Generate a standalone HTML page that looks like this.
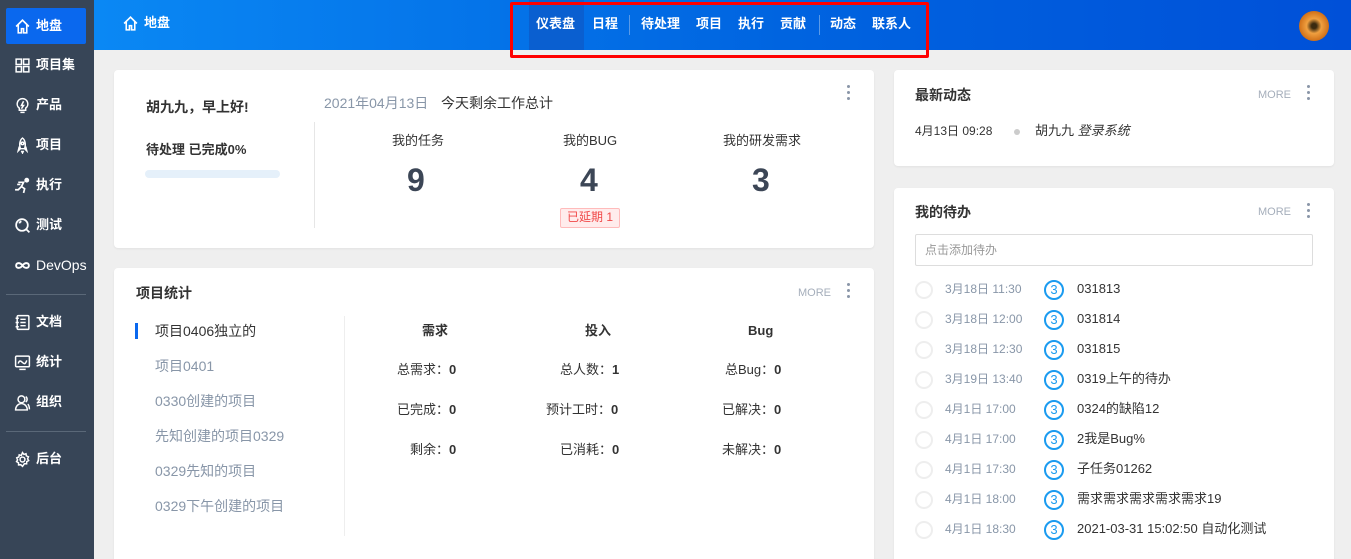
<!DOCTYPE html>
<html><head><meta charset="utf-8"><style>
*{margin:0;padding:0;box-sizing:border-box}
html,body{width:1351px;height:559px;overflow:hidden}
body{background:#efefef;font-family:"Liberation Sans","Noto Sans CJK SC",sans-serif;font-size:13px;color:#333;position:relative;line-height:1.15}
.abs{position:absolute}
#side{left:0;top:0;width:94px;height:559px;background:#374557}
.si{position:absolute;left:6px;width:80px;height:36px;color:#fff;font-weight:bold;font-size:13px;display:flex;align-items:center;padding-left:8px;gap:5px}
.si svg{width:17px;height:17px;flex:none}
.si.act{background:#0a68ee;border-radius:2px}
.sep{position:absolute;left:6px;width:80px;height:1px;background:#5a6878}
#hdr{left:94px;top:0;width:1257px;height:50px;background:linear-gradient(90deg,#0a88f4,#0064e0 55%,#0050d8)}
.nav{position:absolute;top:17px;color:#fff;font-weight:bold;font-size:13px}
.card{position:absolute;background:#fff;border-radius:4px;box-shadow:0 1px 2px rgba(0,0,0,.06)}
.dots{position:absolute;width:4px}
.dots i{display:block;width:3px;height:3px;border-radius:50%;background:#8a96a8;margin-bottom:3px}
.more{position:absolute;font-size:11px;color:#a5aebb}
.t{position:absolute;white-space:nowrap}
.c{position:absolute;width:18px;height:18px;border:2px solid #eee;border-radius:50%}
.n3{position:absolute;width:20px;height:20px;border:2px solid #1a9bf0;border-radius:50%;color:#1a9bf0;font-size:13px;text-align:center;line-height:16px}
</style></head><body>
<div id="side" class="abs">
<div class="si act" style="top:8px"><svg viewBox="0 0 16 16" fill="none" stroke="#fff" stroke-width="1.5"><path d="M2 8L8 2l6 6M4 6.5V14h3v-4h2v4h3V6.5"/></svg>地盘</div>
<div class="si" style="top:47px"><svg viewBox="0 0 16 16" fill="none" stroke="#fff" stroke-width="1.4"><rect x="2" y="2" width="5" height="5"/><rect x="9" y="2" width="5" height="5"/><rect x="2" y="9" width="5" height="5"/><rect x="9" y="9" width="5" height="5"/></svg>项目集</div>
<div class="si" style="top:87px"><svg viewBox="0 0 16 16" fill="none" stroke="#fff" stroke-width="1.4"><path d="M8 1.5a5 5 0 0 0-3 9v2h6v-2a5 5 0 0 0-3-9zM6 14.5h4M9 4L7 8h2l-2 3"/></svg>产品</div>
<div class="si" style="top:127px"><svg viewBox="0 0 16 16" fill="none" stroke="#fff" stroke-width="1.4"><path d="M8 1c3 2 3 7 2 10H6C5 8 5 3 8 1zM6 11l-2 2 1-4M10 11l2 2-1-4M7 13l1 2 1-2"/><circle cx="8" cy="6" r="1.2"/></svg>项目</div>
<div class="si" style="top:167px"><svg viewBox="0 0 16 16" fill="none" stroke="#fff" stroke-width="1.6"><circle cx="12" cy="3" r="1.5" fill="#fff"/><path d="M4 5h5l-2 4 3 2-1 4M7 9l-3 3H1M3 7h3"/></svg>执行</div>
<div class="si" style="top:207px"><svg viewBox="0 0 16 16" fill="none" stroke="#fff" stroke-width="1.6"><circle cx="7.5" cy="7.5" r="5.5"/><path d="M11.5 11.5l3 3M5 6a3 3 0 0 1 2-2"/></svg>测试</div>
<div class="si" style="top:247px;font-weight:normal;font-size:14px"><svg viewBox="0 0 16 16" fill="none" stroke="#fff" stroke-width="1.8"><path d="M8 8c-2-3-6-3-6 0s4 3 6 0 6-3 6 0-4 3-6 0z"/></svg>DevOps</div>
<div class="sep" style="top:294px"></div>
<div class="si" style="top:304px"><svg viewBox="0 0 16 16" fill="none" stroke="#fff" stroke-width="1.4"><rect x="3" y="1.5" width="11" height="13" rx="1"/><path d="M6 5h5M6 8h5M6 11h5M1.5 4h3M1.5 8h3M1.5 12h3"/></svg>文档</div>
<div class="si" style="top:344px"><svg viewBox="0 0 16 16" fill="none" stroke="#fff" stroke-width="1.4"><rect x="1.5" y="2" width="13" height="10" rx="1"/><path d="M4 9c1-3 2-3 4-1s3 1 4-2M5 14.5h6"/></svg>统计</div>
<div class="si" style="top:384px"><svg viewBox="0 0 16 16" fill="none" stroke="#fff" stroke-width="1.4"><circle cx="7" cy="5" r="3.2"/><path d="M1.5 15c0-4 3-6 5.5-6s5.5 2 5.5 6zM11 2.5a3 3 0 0 1 0 5M13 9.5c1 1 1.5 3 1.5 5"/></svg>组织</div>
<div class="sep" style="top:431px"></div>
<div class="si" style="top:441px"><svg viewBox="0 0 16 16" fill="none" stroke="#fff" stroke-width="1.4"><circle cx="8" cy="8" r="2.3"/><path d="M8 1.5l1.3 1.7 2-.6.3 2 2 .8-.8 2 1 1.6-1.8 1-.1 2.1-2.1-.2L8 14.5l-1.6-1.6-2.1.2-.1-2.1-1.8-1 1-1.6-.8-2 2-.8.3-2 2 .6z"/></svg>后台</div>
</div>
<div id="hdr" class="abs">
<div class="abs" style="left:28px;top:15px;color:#fff;font-weight:bold;display:flex;gap:5px;align-items:center"><svg width="17" height="17" viewBox="0 0 16 16" fill="none" stroke="#fff" stroke-width="1.5"><path d="M2 8L8 2l6 6M4 6.5V14h3v-4h2v4h3V6.5"/></svg>地盘</div>
<div class="abs" style="left:435px;top:0;width:55px;height:50px;background:#0a5fd0"></div>
<div class="nav" style="left:442px">仪表盘</div>
<div class="nav" style="left:498px">日程</div>
<div class="abs" style="left:535px;top:15px;width:1px;height:20px;background:#5a9ae8"></div>
<div class="nav" style="left:547px">待处理</div>
<div class="nav" style="left:602px">项目</div>
<div class="nav" style="left:644px">执行</div>
<div class="nav" style="left:686px">贡献</div>
<div class="abs" style="left:725px;top:15px;width:1px;height:20px;background:#5a9ae8"></div>
<div class="nav" style="left:736px">动态</div>
<div class="nav" style="left:778px">联系人</div>
<div class="abs" style="left:1205px;top:11px;width:30px;height:30px;border-radius:50%;background:radial-gradient(circle,#3a2a10 12%,#f0a040 35%,#d07018 70%,#4a3018)"></div>
</div>
<div class="abs" style="left:510px;top:2px;width:419px;height:56px;border:3px solid #f00;border-radius:2px"></div>

<div class="card" style="left:114px;top:70px;width:760px;height:178px">
<div class="t" style="left:32px;top:29px;font-weight:bold;font-size:14px">胡九九，早上好!</div>
<div class="t" style="left:32px;top:73px;font-weight:bold">待处理 已完成0%</div>
<div class="abs" style="left:31px;top:100px;width:135px;height:8px;border-radius:4px;background:#e5f0fa"></div>
<div class="abs" style="left:200px;top:52px;width:1px;height:106px;background:#e6e6e6"></div>
<div class="t" style="left:210px;top:25px;font-size:14px;color:#8896a8">2021年04月13日</div>
<div class="t" style="left:327px;top:25px;font-size:14px">今天剩余工作总计</div>
<div class="t" style="left:278px;top:64px">我的任务</div>
<div class="t" style="left:293px;top:92px;font-size:32px;font-weight:bold;color:#3c4656">9</div>
<div class="t" style="left:449px;top:64px">我的BUG</div>
<div class="t" style="left:466px;top:92px;font-size:32px;font-weight:bold;color:#3c4656">4</div>
<div class="t" style="left:446px;top:138px;padding:2px 6px;border:1px solid #fbb;background:#ffecec;color:#f04848;font-size:12px;border-radius:2px">已延期 1</div>
<div class="t" style="left:609px;top:64px">我的研发需求</div>
<div class="t" style="left:638px;top:92px;font-size:32px;font-weight:bold;color:#3c4656">3</div>
<div class="dots" style="left:733px;top:15px"><i></i><i></i><i></i></div>
</div>

<div class="card" style="left:114px;top:268px;width:760px;height:300px">
<div class="t" style="left:22px;top:17px;font-weight:bold;font-size:14px">项目统计</div>
<div class="more" style="left:684px;top:19px">MORE</div>
<div class="dots" style="left:733px;top:15px"><i></i><i></i><i></i></div>
<div class="abs" style="left:21px;top:55px;width:3px;height:16px;background:#0a68ee"></div>
<div class="t" style="left:41px;top:55px;font-size:14px">项目0406独立的</div>
<div class="t" style="left:41px;top:90px;font-size:14px;color:#8896a8">项目0401</div>
<div class="t" style="left:41px;top:125px;font-size:14px;color:#8896a8">0330创建的项目</div>
<div class="t" style="left:41px;top:160px;font-size:14px;color:#8896a8">先知创建的项目0329</div>
<div class="t" style="left:41px;top:195px;font-size:14px;color:#8896a8">0329先知的项目</div>
<div class="t" style="left:41px;top:230px;font-size:14px;color:#8896a8">0329下午创建的项目</div>
<div class="abs" style="left:230px;top:48px;width:1px;height:220px;background:#eee"></div>
<div class="t" style="left:308px;top:56px;font-weight:bold">需求</div>
<div class="t" style="left:471px;top:56px;font-weight:bold">投入</div>
<div class="t" style="left:634px;top:56px;font-weight:bold">Bug</div>
<div class="t" style="left:283px;top:95px">总需求：<b>0</b></div>
<div class="t" style="left:446px;top:95px">总人数：<b>1</b></div>
<div class="t" style="left:611px;top:95px">总Bug：<b>0</b></div>
<div class="t" style="left:283px;top:135px">已完成：<b>0</b></div>
<div class="t" style="left:432px;top:135px">预计工时：<b>0</b></div>
<div class="t" style="left:608px;top:135px">已解决：<b>0</b></div>
<div class="t" style="left:296px;top:175px">剩余：<b>0</b></div>
<div class="t" style="left:446px;top:175px">已消耗：<b>0</b></div>
<div class="t" style="left:608px;top:175px">未解决：<b>0</b></div>
</div>

<div class="card" style="left:894px;top:70px;width:440px;height:96px">
<div class="t" style="left:21px;top:17px;font-weight:bold;font-size:14px">最新动态</div>
<div class="more" style="left:364px;top:19px">MORE</div>
<div class="dots" style="left:413px;top:15px"><i></i><i></i><i></i></div>
<div class="t" style="left:21px;top:55px;font-size:12px">4月13日 09:28</div>
<div class="abs" style="left:120px;top:59px;width:6px;height:6px;border-radius:50%;background:#ccc"></div>
<div class="t" style="left:141px;top:54px">胡九九 <i>登录系统</i></div>
</div>

<div class="card" style="left:894px;top:188px;width:440px;height:380px">
<div class="t" style="left:21px;top:16px;font-weight:bold;font-size:14px">我的待办</div>
<div class="more" style="left:364px;top:18px">MORE</div>
<div class="dots" style="left:413px;top:15px"><i></i><i></i><i></i></div>
<div class="abs" style="left:21px;top:46px;width:398px;height:32px;border:1px solid #ddd;border-radius:2px;font-size:12px;color:#999;padding:9px 9px">点击添加待办</div>
</div>
<div class="c" style="left:915px;top:281px"></div><div class="t" style="left:945px;top:283px;font-size:12px;color:#8896a8">3月18日 11:30</div><div class="n3" style="left:1044px;top:280px">3</div><div class="t" style="left:1077px;top:282px">031813</div>
<div class="c" style="left:915px;top:311px"></div><div class="t" style="left:945px;top:313px;font-size:12px;color:#8896a8">3月18日 12:00</div><div class="n3" style="left:1044px;top:310px">3</div><div class="t" style="left:1077px;top:312px">031814</div>
<div class="c" style="left:915px;top:341px"></div><div class="t" style="left:945px;top:343px;font-size:12px;color:#8896a8">3月18日 12:30</div><div class="n3" style="left:1044px;top:340px">3</div><div class="t" style="left:1077px;top:342px">031815</div>
<div class="c" style="left:915px;top:371px"></div><div class="t" style="left:945px;top:373px;font-size:12px;color:#8896a8">3月19日 13:40</div><div class="n3" style="left:1044px;top:370px">3</div><div class="t" style="left:1077px;top:372px">0319上午的待办</div>
<div class="c" style="left:915px;top:401px"></div><div class="t" style="left:945px;top:403px;font-size:12px;color:#8896a8">4月1日 17:00</div><div class="n3" style="left:1044px;top:400px">3</div><div class="t" style="left:1077px;top:402px">0324的缺陷12</div>
<div class="c" style="left:915px;top:431px"></div><div class="t" style="left:945px;top:433px;font-size:12px;color:#8896a8">4月1日 17:00</div><div class="n3" style="left:1044px;top:430px">3</div><div class="t" style="left:1077px;top:432px">2我是Bug%</div>
<div class="c" style="left:915px;top:461px"></div><div class="t" style="left:945px;top:463px;font-size:12px;color:#8896a8">4月1日 17:30</div><div class="n3" style="left:1044px;top:460px">3</div><div class="t" style="left:1077px;top:462px">子任务01262</div>
<div class="c" style="left:915px;top:491px"></div><div class="t" style="left:945px;top:493px;font-size:12px;color:#8896a8">4月1日 18:00</div><div class="n3" style="left:1044px;top:490px">3</div><div class="t" style="left:1077px;top:492px">需求需求需求需求需求19</div>
<div class="c" style="left:915px;top:521px"></div><div class="t" style="left:945px;top:523px;font-size:12px;color:#8896a8">4月1日 18:30</div><div class="n3" style="left:1044px;top:520px">3</div><div class="t" style="left:1077px;top:522px">2021-03-31 15:02:50 自动化测试</div>
</body></html>
